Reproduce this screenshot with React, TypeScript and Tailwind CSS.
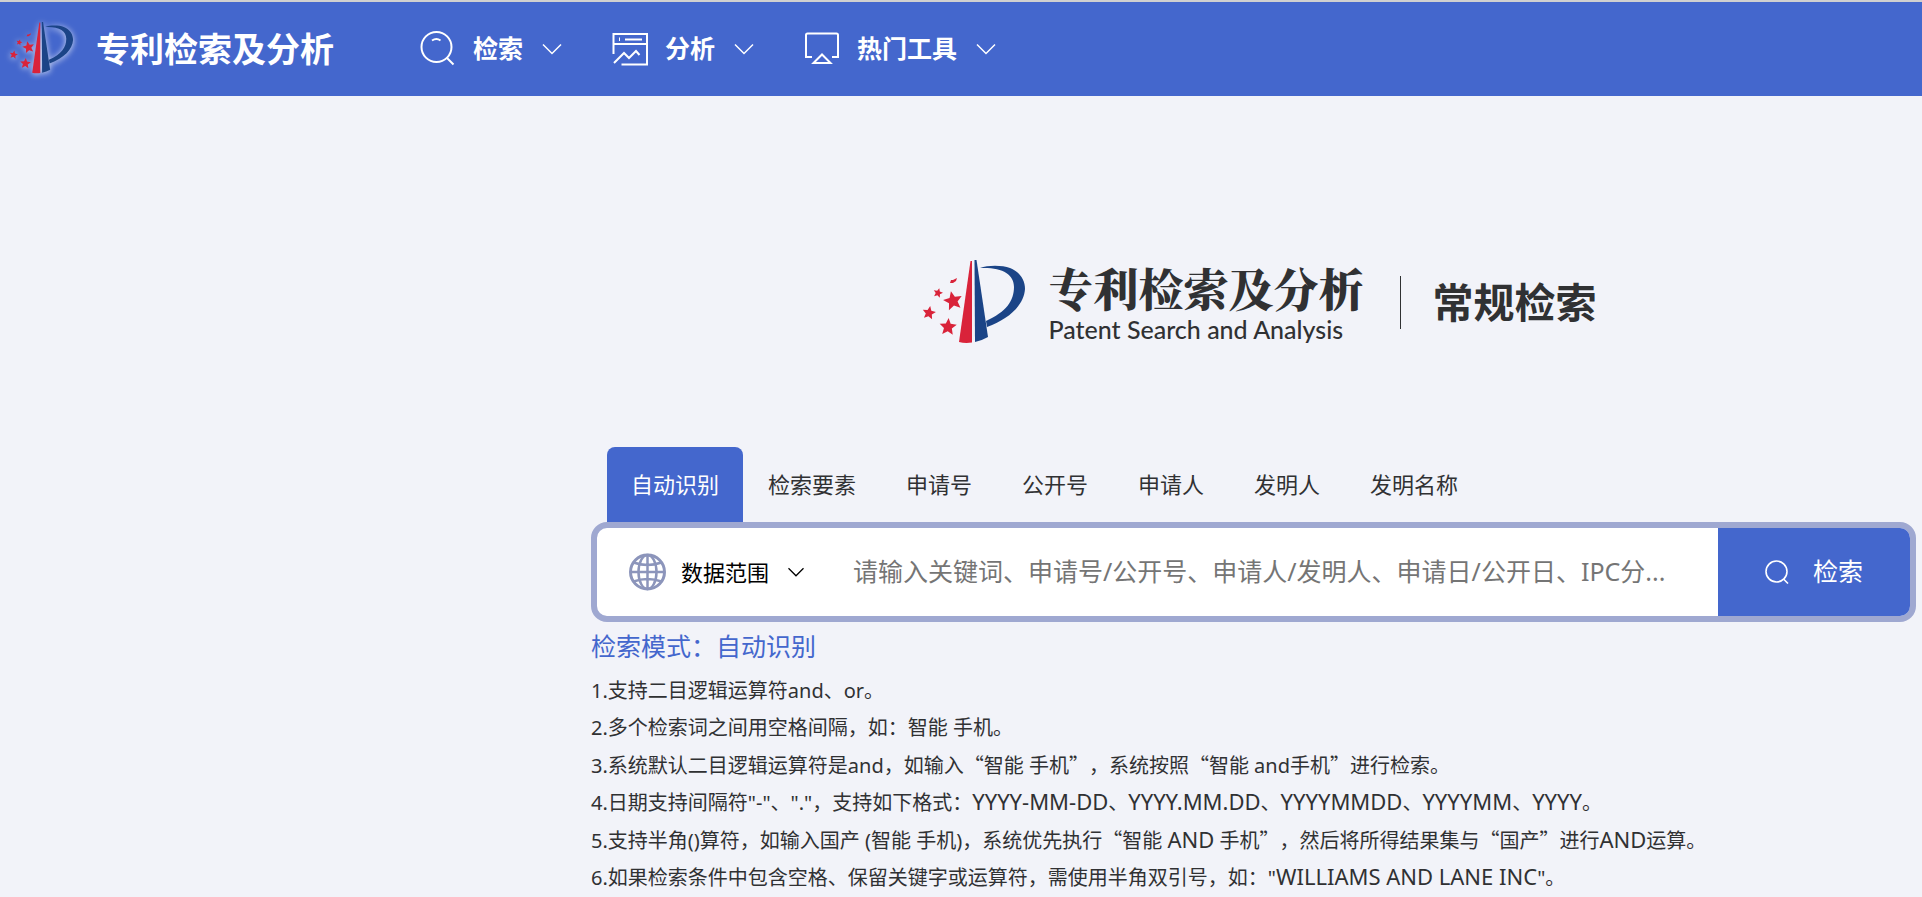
import type { ReactNode } from "react";

const BODY = "font-['Noto_Sans','Noto_Sans_CJK_SC',sans-serif]";

function Star({ cx, cy, r, turn = 0 }: { cx: number; cy: number; r: number; turn?: number }) {
  const points = Array.from({ length: 10 }, (_, i) => {
    const a = ((i * 36 - 90 + turn) * Math.PI) / 180;
    const d = i % 2 === 0 ? r : r * 0.46;
    return `${(cx + d * Math.cos(a)).toFixed(2)},${(cy + d * Math.sin(a)).toFixed(2)}`;
  }).join(" ");
  return <polygon points={points} fill="#d9233a" />;
}

function Emblem({ className }: { className: string }) {
  return (
    <svg viewBox="0 0 104 84" className={className} aria-hidden="true">
      <path d="M48.500 1 L50 1 V82.500 Q43 83.500 37 82 Z" fill="#d9233a" />
      <path d="M52.500 0 H54.500 L66 77 Q60 80.500 53 82 Z" fill="#1b4487" />
      <path
        d="M58 8 C66 5 80 5 88 8 C98 12 103 20 103 29 C102 44 89 58 65 67 L64 61 C84 52 92 41 92 27 C92 14 80 7 58 8 Z"
        fill="#1b4487"
      />
      <Star cx={31} cy={41} r={10} turn={-12} />
      <Star cx={26} cy={67} r={9} turn={4} />
      <Star cx={7} cy={53} r={7} turn={10} />
      <Star cx={16} cy={33} r={5} turn={15} />
      <path d="M28 23 L29 20 L31 20 L35 18 L34 21 L31 23 Z" fill="#d9233a" />
    </svg>
  );
}

function Chevron({ className }: { className: string }) {
  return (
    <svg viewBox="0 0 20 12" className={className} fill="none" stroke="currentColor" aria-hidden="true">
      <path d="M1 1.500 L10 10.500 L19 1.500" strokeWidth="1.500" />
    </svg>
  );
}

function SearchIcon() {
  return (
    <svg viewBox="0 0 36 36" className="size-9" fill="none" stroke="currentColor" strokeWidth="2" aria-hidden="true">
      <circle cx="16.500" cy="16" r="15" />
      <path d="M12 9.500 Q16.500 6.500 20.500 9.500" />
      <path d="M26.500 26.500 L33.500 33.500" />
    </svg>
  );
}

function ChartIcon() {
  return (
    <svg viewBox="0 0 36 36" className="size-9" fill="none" stroke="currentColor" strokeWidth="2" aria-hidden="true">
      <path d="M1.500 23 V3 H35 V33.500 H9.500" />
      <path d="M1.500 13 H35" />
      <path d="M7.500 6.500 V10" strokeWidth="1" />
      <path d="M13 8.500 H30" />
      <path d="M2 32 L12 22 L17 27 L24 20 L27.500 24" />
    </svg>
  );
}

function ScreenIcon() {
  return (
    <svg viewBox="0 0 36 36" className="size-9" fill="none" stroke="currentColor" strokeWidth="2" aria-hidden="true">
      <path d="M8 26 H2 V4 Q2 2.500 3.500 2.500 H32.500 Q34 2.500 34 4 V26 H28" />
      <path d="M9.500 32 L18 23.500 L26.500 32 Z" />
    </svg>
  );
}

function GlobeIcon() {
  return (
    <svg viewBox="0 0 38 38" className="size-[38px] shrink-0" fill="none" stroke="#8c95bb" strokeWidth="2.500" aria-hidden="true">
      <circle cx="18.500" cy="19" r="17" strokeWidth="3" />
      <ellipse cx="18.500" cy="19" rx="9" ry="17" />
      <path d="M18.500 2 V36 M1.500 19 H35.500 M4.500 9.500 Q18.500 14.500 32.500 9.500 M4.500 28.500 Q18.500 23.500 32.500 28.500" />
    </svg>
  );
}

function NavItem({ icon, label }: { icon: ReactNode; label: string }) {
  return (
    <button type="button" className="flex items-center">
      {icon}
      <span className="ml-[17px] text-[25px] font-bold">{label}</span>
      <Chevron className="ml-[19px] h-3 w-5" />
    </button>
  );
}

const tabs = ["自动识别", "检索要素", "申请号", "公开号", "申请人", "发明人", "发明名称"];

const tips = [
  "1.支持二目逻辑运算符and、or。",
  "2.多个检索词之间用空格间隔，如：智能 手机。",
  "3.系统默认二目逻辑运算符是and，如输入“智能 手机”，系统按照“智能 and手机”进行检索。",
  "4.日期支持间隔符\"-\"、\".\"，支持如下格式：YYYY-MM-DD、YYYY.MM.DD、YYYYMMDD、YYYYMM、YYYY。",
  "5.支持半角()算符，如输入国产 (智能 手机)，系统优先执行“智能 AND 手机”，然后将所得结果集与“国产”进行AND运算。",
  "6.如果检索条件中包含空格、保留关键字或运算符，需使用半角双引号，如：\"WILLIAMS AND LANE INC\"。",
];

/** Curly quotes take a full em in the Chinese face; capitals are set larger beside the ideographs. */
function Tip({ text }: { text: string }) {
  return (
    <li>
      {text.split(/([“”]|[A-Z][A-Z.\- ]+[A-Z])/).map((part, i) => {
        if (i % 2 === 0) return part;
        const isQuote = part === "“" || part === "”";
        return (
          <span key={i} className={isQuote ? "font-['Noto_Sans_CJK_SC',sans-serif]" : "text-[22px] leading-none"}>
            {part}
          </span>
        );
      })}
    </li>
  );
}

export default function App() {
  return (
    <div className={`min-h-screen bg-[#f2f3f9] text-[#303133] ${BODY}`}>
      <header className="flex h-24 items-center border-t-2 border-[#d0d0d0] bg-[#4467cd] pl-2 text-white">
        <Emblem className="mt-5 h-[52px] w-[67px] self-start drop-shadow-[0_1px_3px_rgba(255,255,255,0.8)]" />
        <span className="ml-[21px] text-[34px] leading-none font-bold">专利检索及分析</span>
        <nav className="ml-[86px] flex gap-[50px]">
          <NavItem icon={<SearchIcon />} label="检索" />
          <NavItem icon={<ChartIcon />} label="分析" />
          <NavItem icon={<ScreenIcon />} label="热门工具" />
        </nav>
      </header>

      <main className="pr-[6px] pl-[591px]">
        <div className="flex items-center justify-center pt-[164px] pl-3">
          <Emblem className="h-[84px] w-[104px]" />
          <div className="ml-[22px] flex flex-col">
            <span className="font-['Noto_Serif_CJK_SC','Noto_Sans_CJK_SC',serif] text-[45px] leading-[54px] font-black">
              专利检索及分析
            </span>
            <span className="font-['Lato',sans-serif] text-[25px] leading-7 font-medium">Patent Search and Analysis</span>
          </div>
          <div className="ml-9 h-[53px] w-px bg-[#303133]" />
          <h1 className="ml-8 text-[41px] leading-[53px] font-bold">常规检索</h1>
        </div>

        <div className="mt-[103px] flex pl-4 text-[22px]" role="tablist">
          {tabs.map((tab, i) => (
            <button
              key={tab}
              type="button"
              role="tab"
              aria-selected={i === 0}
              className={i === 0 ? "h-[75px] rounded-t-lg bg-[#4467cd] px-6 text-white" : "h-[75px] px-[25px]"}
            >
              {tab}
            </button>
          ))}
        </div>

        <form className="flex h-[100px] overflow-hidden rounded-2xl border-[6px] border-[#9fa8d1] bg-white">
          <button type="button" className="flex items-center pl-8 text-[22px] text-black">
            <GlobeIcon />
            <span className="ml-[14px]">数据范围</span>
            <Chevron className="ml-[18px] h-[10px] w-[18px]" />
          </button>
          <input
            type="text"
            aria-label="检索"
            placeholder="请输入关键词、申请号/公开号、申请人/发明人、申请日/公开日、IPC分..."
            className="ml-12 min-w-0 flex-1 text-[25px] outline-none placeholder:text-[#757575]"
          />
          <button type="button" className="flex w-48 items-center justify-center gap-6 bg-[#4467cd] text-[25px] text-white">
            <svg viewBox="0 0 24 24" className="size-6" fill="none" stroke="currentColor" strokeWidth="1.600" aria-hidden="true">
              <circle cx="11.500" cy="11.500" r="10.500" />
              <path d="M18.500 19 L23 23.500" />
            </svg>
            检索
          </button>
        </form>

        <h2 className="pt-[6px] text-[25px] leading-9 text-[#4467cd]">检索模式：自动识别</h2>
        <ol className="mt-2 text-[20px] leading-[37px] [text-spacing-trim:space-all]">
          {tips.map((tip) => (
            <Tip key={tip} text={tip} />
          ))}
        </ol>
      </main>
    </div>
  );
}
